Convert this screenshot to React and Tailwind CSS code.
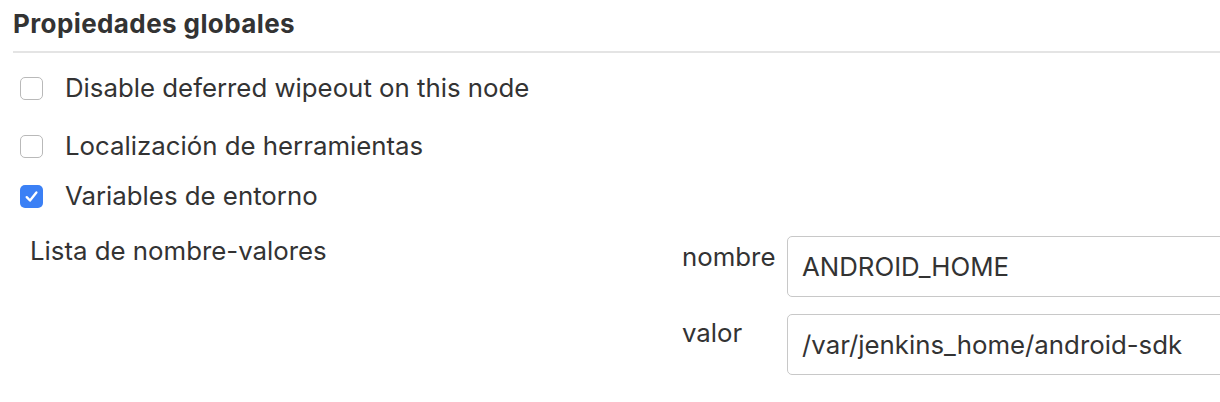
import React from "react";

function Check({ checked, label }) {
  return (
    <label className="flex items-center gap-[22px] pl-[7px]">
      {checked ? (
        <span className="flex h-[23px] w-[23px] items-center justify-center rounded-[5px] bg-[#3b80f5]">
          <svg viewBox="0 0 16 16" className="h-[17px] w-[17px]" fill="none" stroke="white" strokeWidth="2.2" strokeLinecap="round" strokeLinejoin="round">
            <path d="M3.5 8.6l3.1 3.2 6-7.6" />
          </svg>
        </span>
      ) : (
        <span className="h-[23px] w-[23px] rounded-[5px] border border-[#b9b9b9] bg-white" />
      )}
      <span>{label}</span>
    </label>
  );
}

export default function App() {
  return (
    <div className="h-[402px] w-[1220px] overflow-hidden bg-white pl-[13px] text-[25.8px] leading-[30px] text-[#333]" style={{ fontFamily: 'Inter, "Liberation Sans", Arial, sans-serif' }}>
      <h2 className="pt-[9px] pb-[12px] text-[26px] font-bold leading-[30px] tracking-[0.4px] border-b-2 border-[#e4e4e4] w-[1240px]">Propiedades globales</h2>
      <div className="mt-[20px]">
        <Check label="Disable deferred wipeout on this node" />
      </div>
      <div className="mt-[28px]">
        <Check label="Localización de herramientas" />
      </div>
      <div className="mt-[20px]">
        <Check checked label="Variables de entorno" />
      </div>
      <div className="mt-[25px] flex">
        <div className="w-[669px] shrink-0 pl-[17px]">Lista de nombre-valores</div>
        <div className="grid grid-cols-[105px_460px] gap-y-[17px]">
          <div className="pt-[6px]">nombre</div>
          <div className="flex h-[61px] items-center rounded-[5px] border border-[#c8c8c8] pl-[14px]">ANDROID_HOME</div>
          <div className="pt-[4px]">valor</div>
          <div className="flex h-[61px] items-center rounded-[5px] border border-[#c8c8c8] pl-[14px]">/var/jenkins_home/android-sdk</div>
        </div>
      </div>
    </div>
  );
}
